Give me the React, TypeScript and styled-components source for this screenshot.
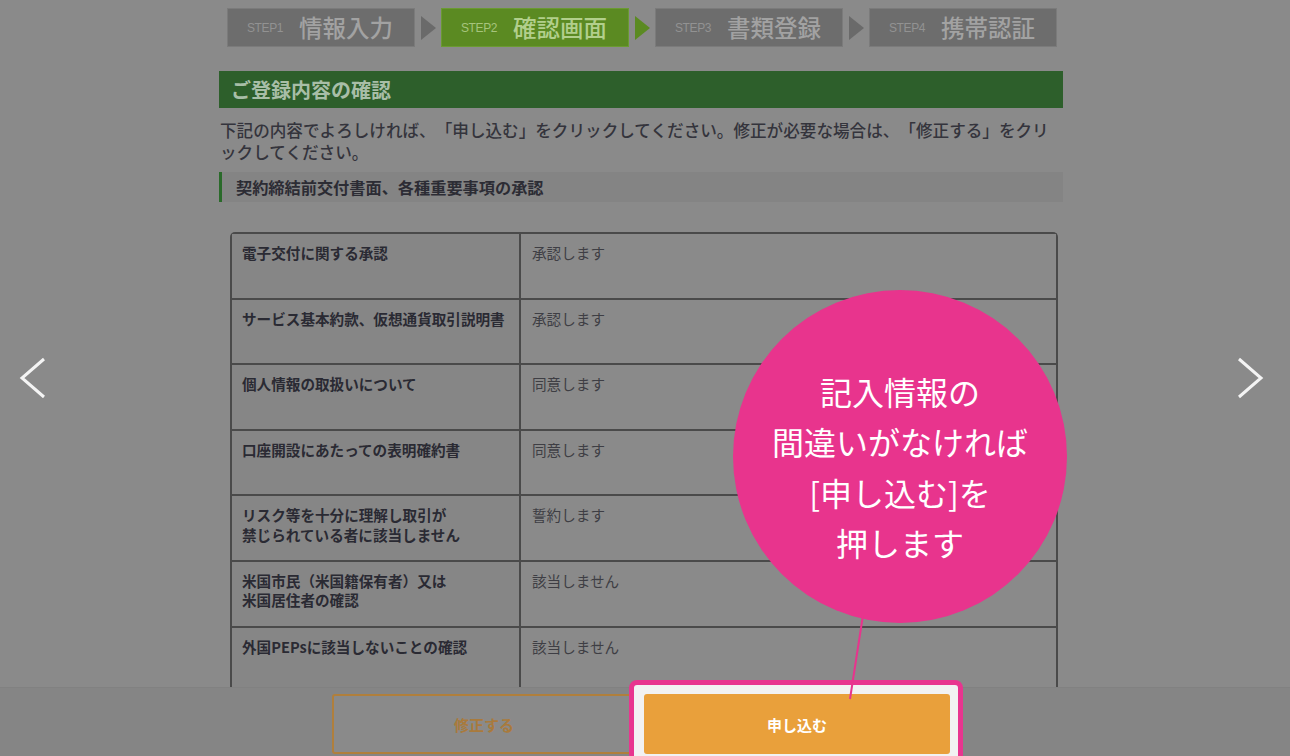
import styled, { createGlobalStyle } from "styled-components";

const GlobalStyle = createGlobalStyle`
  html, body {
    margin: 0;
    padding: 0;
    background: #8a8a8a;
  }
  body {
    font-family: "Noto Sans CJK JP", "Noto Sans", sans-serif;
    text-spacing-trim: space-all;
  }
  * {
    box-sizing: border-box;
  }
`;

const Page = styled.div`
  position: relative;
  width: 1290px;
  height: 756px;
  display: flex;
  flex-direction: column;
  overflow: hidden;
  background: #8a8a8a;
`;

const Main = styled.main`
  flex: 1;
  overflow: hidden;
  padding-top: 8px;
`;

const Steps = styled.ol`
  display: flex;
  align-items: center;
  list-style: none;
  margin: 0 0 0 227px;
  padding: 0;
  height: 39px;
`;

const Step = styled.li<{ $active?: boolean }>`
  width: 188px;
  height: 39px;
  display: flex;
  align-items: center;
  gap: 16px;
  padding-left: 19px;
  background: ${(p) => (p.$active ? "#5b8a22" : "#6d6d6d")};
  border: 1px solid ${(p) => (p.$active ? "#6b9a32" : "#7b7b7b")};
`;

const StepLabel = styled.span<{ $active?: boolean }>`
  font-family: "Liberation Sans", Arial, sans-serif;
  font-size: 12px;
  letter-spacing: -0.4px;
  color: ${(p) => (p.$active ? "#a6c47c" : "#929292")};
`;

const StepName = styled.span<{ $active?: boolean }>`
  font-size: 23.5px;
  font-weight: 500;
  line-height: 1;
  color: ${(p) => (p.$active ? "#b2cf8c" : "#a2a2a2")};
`;

const StepArrow = styled.li<{ $active?: boolean }>`
  width: 26px;
  display: flex;
  justify-content: center;
  &::before {
    content: "";
    border-left: 15px solid ${(p) => (p.$active ? "#5b8a22" : "#6a6a6a")};
    border-top: 12px solid transparent;
    border-bottom: 12px solid transparent;
  }
`;

const Content = styled.section`
  width: 844px;
  margin: 24px 0 0 219px;
`;

const SectionTitle = styled.h2`
  margin: 0;
  height: 37px;
  display: flex;
  align-items: center;
  padding-left: 12px;
  background: #2d5f2b;
  color: #a8bea7;
  font-size: 20px;
  font-weight: 700;
`;

const Lead = styled.p`
  margin: 11px 0 0 1px;
  font-size: 16.6px;
  line-height: 22px;
  font-weight: 500;
  color: #34343c;
  white-space: nowrap;
`;

const SubHeading = styled.h3`
  margin: 9px 0 0;
  height: 30px;
  display: flex;
  align-items: center;
  padding-left: 14px;
  border-left: 3px solid #2a6a2a;
  background: #848484;
  color: #2c2c34;
  font-size: 16.2px;
  font-weight: 700;
`;

const Table = styled.div`
  margin: 30px 5px 0 11px;
  display: grid;
  grid-template-columns: 289px 1fr;
  border: 2px solid #4a4a4a;
  border-bottom: none;
  border-radius: 5px 5px 0 0;
`;

const Cell = styled.div<{ $label?: boolean }>`
  height: 65.6px;
  padding: 9px 0 0 ${(p) => (p.$label ? "10px" : "11px")};
  border-bottom: 2px solid #4a4a4a;
  border-right: ${(p) => (p.$label ? "2px solid #4a4a4a" : "none")};
  background: ${(p) => (p.$label ? "#868686" : "#8a8a8a")};
  font-size: 14.6px;
  line-height: 19.5px;
  font-weight: ${(p) => (p.$label ? 700 : 400)};
  color: ${(p) => (p.$label ? "#2a2a33" : "#3e3e44")};
`;

const Footer = styled.footer`
  height: 69px;
  flex-shrink: 0;
  display: flex;
  justify-content: center;
  align-items: flex-start;
  gap: 8px;
  padding: 6px 8px 0 0;
  background: #858585;
  border-top: 1px solid #818181;
`;

const EditButton = styled.button`
  width: 304px;
  height: 60px;
  border: 2px solid #b07f3c;
  border-radius: 3px;
  background: #8a8a8a;
  color: #a97a3c;
  font-family: inherit;
  font-size: 15px;
  font-weight: 700;
`;

const ApplyWrap = styled.div`
  position: relative;
`;

const Highlight = styled.span`
  position: absolute;
  top: -14px;
  left: -15px;
  right: -13px;
  bottom: -14px;
  border: 5px solid #e8358f;
  border-radius: 8px;
  background: #f2f2f2;
`;

const ApplyButton = styled.button`
  position: relative;
  width: 306px;
  height: 60px;
  border: none;
  border-radius: 3px;
  background: #e9a03b;
  color: #ffffff;
  font-family: inherit;
  font-size: 15px;
  font-weight: 700;
`;

const Bubble = styled.div`
  position: absolute;
  left: 733px;
  top: 290px;
  width: 334px;
  height: 333px;
  border-radius: 50%;
  background: #e8348d;
  display: flex;
  align-items: center;
  justify-content: center;
  padding-top: 20px;
  color: #ffffff;
  font-size: 32px;
  font-weight: 400;
  line-height: 50.5px;
  text-align: center;
  z-index: 5;
`;

const Pointer = styled.svg`
  position: absolute;
  left: 846px;
  top: 615px;
  z-index: 5;
`;

const Nav = styled.svg<{ $side: "left" | "right" }>`
  position: absolute;
  top: 357px;
  ${(p) => (p.$side === "left" ? "left: 19px;" : "right: 26px;")}
`;

const steps = [
  { label: "STEP1", name: "情報入力" },
  { label: "STEP2", name: "確認画面", active: true },
  { label: "STEP3", name: "書類登録" },
  { label: "STEP4", name: "携帯認証" },
];

const rows: { label: string[]; value: string }[] = [
  { label: ["電子交付に関する承認"], value: "承認します" },
  { label: ["サービス基本約款、仮想通貨取引説明書"], value: "承認します" },
  { label: ["個人情報の取扱いについて"], value: "同意します" },
  { label: ["口座開設にあたっての表明確約書"], value: "同意します" },
  { label: ["リスク等を十分に理解し取引が", "禁じられている者に該当しません"], value: "誓約します" },
  { label: ["米国市民（米国籍保有者）又は", "米国居住者の確認"], value: "該当しません" },
  { label: ["外国PEPsに該当しないことの確認"], value: "該当しません" },
];

function App() {
  return (
    <>
      <GlobalStyle />
      <Page>
        <Main>
          <Steps>
            {steps.map((s, i) => (
              <>
                <Step key={s.label} $active={s.active}>
                  <StepLabel $active={s.active}>{s.label}</StepLabel>
                  <StepName $active={s.active}>{s.name}</StepName>
                </Step>
                {i < steps.length - 1 && <StepArrow key={s.label + "-arrow"} $active={s.active} />}
              </>
            ))}
          </Steps>

          <Content>
            <SectionTitle>ご登録内容の確認</SectionTitle>
            <Lead>
              下記の内容でよろしければ、「申し込む」をクリックしてください。修正が必要な場合は、「修正する」をクリ
              <br />
              ックしてください。
            </Lead>
            <SubHeading>契約締結前交付書面、各種重要事項の承認</SubHeading>
            <Table>
              {rows.map((r) => (
                <>
                  <Cell key={r.label[0]} $label>
                    {r.label.map((line, j) => (
                      <div key={j}>{line}</div>
                    ))}
                  </Cell>
                  <Cell key={r.label[0] + "-v"}>{r.value}</Cell>
                </>
              ))}
            </Table>
          </Content>
        </Main>

        <Footer>
          <EditButton>修正する</EditButton>
          <ApplyWrap>
            <Highlight />
            <ApplyButton>申し込む</ApplyButton>
          </ApplyWrap>
        </Footer>

        <Bubble>
          記入情報の
          <br />
          間違いがなければ
          <br />
          [申し込む]を
          <br />
          押します
        </Bubble>
        <Pointer width="24" height="90" viewBox="0 0 24 90">
          <line x1="17" y1="0" x2="4" y2="84" stroke="#e8348d" strokeWidth="2" />
        </Pointer>

        <Nav $side="left" width="27" height="42" viewBox="0 0 27 42">
          <polyline points="25,2 3,21 25,40" fill="none" stroke="#f4f4f4" strokeWidth="3" />
        </Nav>
        <Nav $side="right" width="27" height="42" viewBox="0 0 27 42">
          <polyline points="2,2 24,21 2,40" fill="none" stroke="#f4f4f4" strokeWidth="3" />
        </Nav>
      </Page>
    </>
  );
}

export default App;
